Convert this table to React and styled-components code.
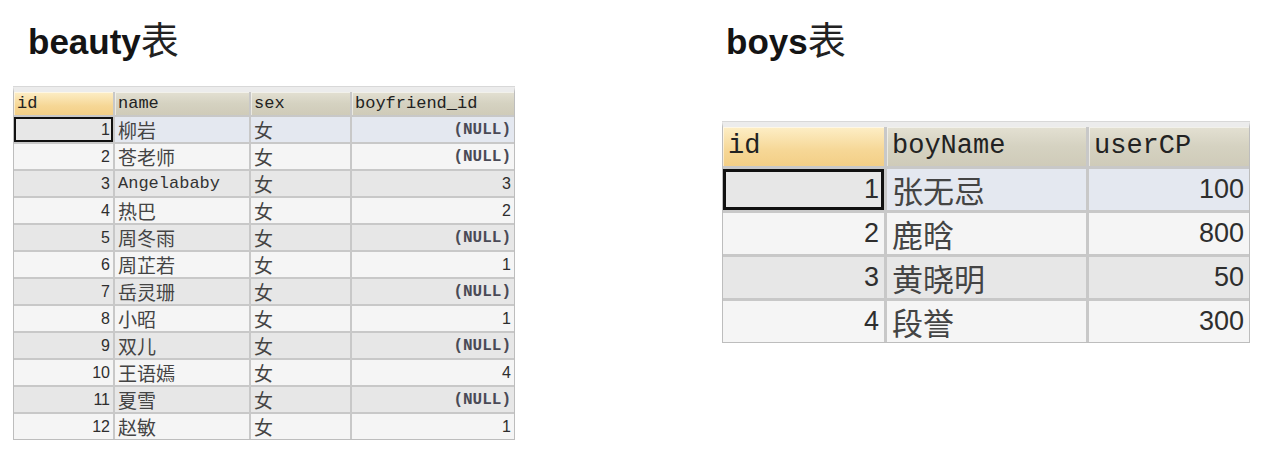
import React from "react";
import styled, { createGlobalStyle, css } from "styled-components";

const Global = createGlobalStyle`
  html, body { margin: 0; padding: 0; background: #ffffff; }
  body { font-family: "Liberation Sans", "Noto Sans CJK SC", sans-serif; }
`;

const Page = styled.div`
  display: flex;
  width: 1270px;
  height: 474px;
  background: #ffffff;
  overflow: hidden;
`;

const Section = styled.section`
  display: flex;
  flex-direction: column;
  width: ${(p) => p.$width}px;
  padding-left: ${(p) => p.$pad}px;
  box-sizing: border-box;
`;

const Title = styled.h2`
  margin: 18px 0 0 ${(p) => p.$indent}px;
  height: 40px;
  line-height: 40px;
  font-size: 35px;
  font-weight: 700;
  color: #141414;
  font-family: "Liberation Sans", "Noto Sans CJK SC", sans-serif;
  white-space: nowrap;
`;

const TitleCjk = styled.span`
  font-family: "Noto Sans CJK SC", sans-serif;
  font-weight: 400;
  font-size: 38px;
  color: #222;
`;

const Frame = styled.div`
  margin-top: ${(p) => p.$top}px;
  width: max-content;
  border: 1px solid #bdbdbd;
  border-top: ${(p) => p.$band}px solid #ececec;
  box-shadow: 0 -1px 0 #d8d8d8;
  background: #c9c9c9;
`;

const Grid = styled.div`
  display: grid;
  grid-template-columns: ${(p) => p.$cols};
  grid-template-rows: ${(p) => p.$head}px;
  grid-auto-rows: ${(p) => p.$row}px;
  gap: ${(p) => p.$gap}px;
  background: #c8c8c8;
`;

const HeadCell = styled.div`
  display: flex;
  align-items: center;
  padding-left: ${(p) => p.$padX}px;
  font-family: "Liberation Mono", monospace;
  font-size: ${(p) => p.$size}px;
  line-height: 1;
  color: #222;
  background: ${(p) =>
    p.$key
      ? "linear-gradient(#fdeec6, #f6d796 60%, #f3cf86)"
      : "linear-gradient(#e3e0d2, #d5d2c1 50%, #cfcbb9)"};
  box-shadow: inset 1px 1px 0 rgba(255, 255, 255, 0.55);
  white-space: nowrap;
`;

const Cell = styled.div`
  display: flex;
  align-items: center;
  justify-content: ${(p) => (p.$right ? "flex-end" : "flex-start")};
  padding: 0 ${(p) => p.$padX}px;
  background: ${(p) => p.$bg};
  color: #333;
  line-height: 1;
  white-space: nowrap;
  ${(p) =>
    p.$active &&
    css`
      box-shadow: inset 0 0 0 ${p.$ring}px #111;
    `}
`;

const Num = styled.span`
  font-family: "Liberation Sans", sans-serif;
  font-size: ${(p) => p.$size}px;
  color: #2e2e2e;
`;

const Mono = styled.span`
  font-family: "Liberation Mono", monospace;
  font-size: ${(p) => p.$size}px;
  color: #333;
`;

const Null = styled.span`
  font-family: "Liberation Mono", monospace;
  font-weight: 700;
  font-size: ${(p) => p.$size}px;
  color: #4a4a56;
`;

const Cjk = styled.span`
  font-family: "Noto Sans CJK SC", sans-serif;
  font-size: ${(p) => p.$size}px;
  color: #444;
`;

function Value({ v, kind, sizes }) {
  if (v === null) return <Null $size={sizes.nul}>(NULL)</Null>;
  if (kind === "num") return <Num $size={sizes.num}>{v}</Num>;
  if (/^[\x00-\x7f]+$/.test(String(v))) return <Mono $size={sizes.mono}>{v}</Mono>;
  return <Cjk $size={sizes.cjk}>{v}</Cjk>;
}

function DataTable({ cfg }) {
  const { columns, rows, sizes } = cfg;
  return (
    <Frame $top={cfg.top} $band={cfg.band}>
      <Grid
        $cols={columns.map((c) => c.w + "px").join(" ")}
        $head={cfg.head}
        $row={cfg.row}
        $gap={cfg.gap}
      >
        {columns.map((c, i) => (
          <HeadCell key={c.name} $key={i === 0} $size={sizes.head} $padX={cfg.padX}>
            {c.name}
          </HeadCell>
        ))}
        {rows.map((r, ri) =>
          r.map((v, ci) => {
            const col = columns[ci];
            const selectedRow = ri === 0;
            let bg = ri % 2 === 0 ? "#e7e7e7" : "#f5f5f5";
            if (selectedRow && ci > 0) bg = "#e4e8f0";
            return (
              <Cell
                key={ri + "-" + ci}
                $bg={bg}
                $right={col.kind === "num"}
                $padX={cfg.padX}
                $active={selectedRow && ci === 0}
                $ring={cfg.ring}
              >
                <Value v={v} kind={col.kind} sizes={sizes} />
              </Cell>
            );
          })
        )}
      </Grid>
    </Frame>
  );
}

const beauty = {
  top: 29,
  band: 5,
  head: 23,
  row: 25,
  gap: 2,
  ring: 2,
  padX: 3,
  sizes: { head: 17, num: 16, nul: 16, mono: 17, cjk: 19 },
  columns: [
    { name: "id", w: 99, kind: "num" },
    { name: "name", w: 134, kind: "text" },
    { name: "sex", w: 99, kind: "text" },
    { name: "boyfriend_id", w: 162, kind: "num" },
  ],
  rows: [
    [1, "柳岩", "女", null],
    [2, "苍老师", "女", null],
    [3, "Angelababy", "女", 3],
    [4, "热巴", "女", 2],
    [5, "周冬雨", "女", null],
    [6, "周芷若", "女", 1],
    [7, "岳灵珊", "女", null],
    [8, "小昭", "女", 1],
    [9, "双儿", "女", null],
    [10, "王语嫣", "女", 4],
    [11, "夏雪", "女", null],
    [12, "赵敏", "女", 1],
  ],
};

const boys = {
  top: 64,
  band: 5,
  head: 39,
  row: 41,
  gap: 3,
  ring: 3,
  padX: 5,
  sizes: { head: 27, num: 27, nul: 26, mono: 27, cjk: 31 },
  columns: [
    { name: "id", w: 161, kind: "num" },
    { name: "boyName", w: 199, kind: "text" },
    { name: "userCP", w: 160, kind: "num" },
  ],
  rows: [
    [1, "张无忌", 100],
    [2, "鹿晗", 800],
    [3, "黄晓明", 50],
    [4, "段誉", 300],
  ],
};

export default function App() {
  return (
    <>
      <Global />
      <Page>
        <Section $width={722} $pad={13}>
          <Title $indent={15}>
            beauty<TitleCjk>表</TitleCjk>
          </Title>
          <DataTable cfg={beauty} />
        </Section>
        <Section $width={548} $pad={0}>
          <Title $indent={4}>
            boys<TitleCjk>表</TitleCjk>
          </Title>
          <DataTable cfg={boys} />
        </Section>
      </Page>
    </>
  );
}
